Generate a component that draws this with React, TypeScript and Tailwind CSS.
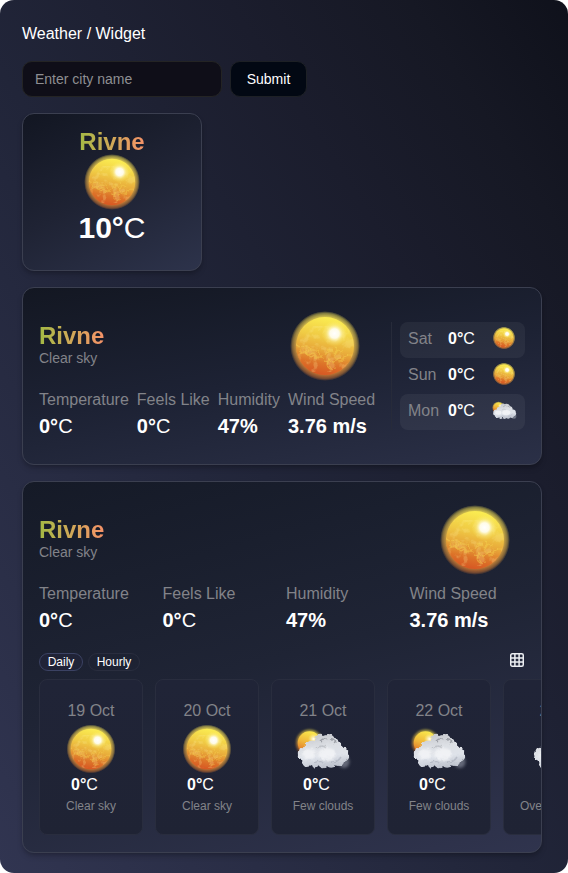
import React, { useId } from "react";

const DISC = "M40 11a29 29 0 1 0 0 58a29 29 0 1 0 0-58Z";
const VEINS =
  "M11 38l4 4 1 5 5-2 3 4 5-2 3 4 5 1 3 4 6-2 4 3 3-5 5 1 4-4 5 0 M16 40l6 1 4 3 6 0 3 5 6-1 3-4 6 3 3-3 5 2 M44 53l-2 6 4 4 5-1 M50 40l2 6-3 4 4 5 6-1 3-7 M24 44l-2 4 4 3 4-2 M37 48l-3 4-5-1";

function Sun({ className = "" }: { className?: string }) {
  const id = useId().replace(/:/g, "");
  return (
    <svg viewBox="0 0 80 80" className={`block shrink-0 ${className}`} aria-hidden="true">
      <defs>
        <linearGradient id={`${id}b`} x1=".6" y1="0" x2=".4" y2="1">
          <stop offset="0" stopColor="#fbee52" />
          <stop offset=".35" stopColor="#f0cb45" />
          <stop offset=".58" stopColor="#e8a93a" />
          <stop offset=".8" stopColor="#dd7429" />
          <stop offset="1" stopColor="#d65523" />
        </linearGradient>
        <linearGradient id={`${id}g`} x1=".6" y1="0" x2=".4" y2="1">
          <stop offset="0" stopColor="#f4e657" />
          <stop offset=".5" stopColor="#e0b045" />
          <stop offset="1" stopColor="#cc6a2c" />
        </linearGradient>
        <radialGradient id={`${id}m`}>
          <stop offset=".8" stopColor="#fff" stopOpacity=".95" />
          <stop offset=".86" stopColor="#fff" stopOpacity=".75" />
          <stop offset=".93" stopColor="#fff" stopOpacity=".5" />
          <stop offset="1" stopColor="#fff" stopOpacity="0" />
        </radialGradient>
        <radialGradient id={`${id}h`}>
          <stop offset="0" stopColor="#fff" />
          <stop offset=".36" stopColor="#fffdf0" stopOpacity=".95" />
          <stop offset=".65" stopColor="#fff6a8" stopOpacity=".4" />
          <stop offset="1" stopColor="#ffed60" stopOpacity="0" />
        </radialGradient>
        <mask id={`${id}k`}>
          <circle cx="40" cy="40" r="35" fill={`url(#${id}m)`} />
        </mask>
        <clipPath id={`${id}c`}>
          <path d={DISC} />
        </clipPath>
        <filter id={`${id}f`} x="0" y="0" width="1" height="1">
          <feTurbulence type="fractalNoise" baseFrequency=".12" numOctaves="4" seed="8" />
          <feColorMatrix values="0 0 0 0 1  0 0 0 0 .86  0 0 0 0 .32  5 0 0 0 -2.3" />
        </filter>
        <filter id={`${id}v`} x="-.1" y="-.1" width="1.2" height="1.2">
          <feTurbulence type="fractalNoise" baseFrequency=".2" numOctaves="3" seed="3" result="n" />
          <feDisplacementMap in="SourceGraphic" in2="n" scale="5" xChannelSelector="R" yChannelSelector="G" />
        </filter>
      </defs>
      <circle cx="40" cy="40" r="35" fill={`url(#${id}g)`} mask={`url(#${id}k)`} />
      <path d={DISC} fill={`url(#${id}b)`} />
      <g clipPath={`url(#${id}c)`}>
        <rect x="11" y="20" width="58" height="46" filter={`url(#${id}f)`} opacity=".24" />
        <path d={VEINS} fill="none" stroke="#f8d850" strokeWidth="1.2" strokeLinejoin="round" opacity=".42" filter={`url(#${id}v)`} />
      </g>
      <circle cx="49.500" cy="27.500" r="13" fill={`url(#${id}h)`} />
    </svg>
  );
}

const CLOUD =
  "M3 27C2 22 6 18 11 19C10 14 15 12 19 13C19 7 24 4 29 7C33 5 38 6 40 11C44 12 47 15 46 19C50 18 54 21 53 25C56 29 53 33 49 34C48 38 44 39 41 37C38 41 34 40 32 38C29 42 26 40 24 38C21 42 17 41 16 37C11 40 6 36 6 32C3 31 2 29 3 27Z";

function FewClouds({ className = "", cloudOnly = false }: { className?: string; cloudOnly?: boolean }) {
  const id = useId().replace(/:/g, "");
  return (
    <svg viewBox="0 0 56 42" className={`block shrink-0 overflow-visible ${className}`} aria-hidden="true">
      <defs>
        <linearGradient id={`${id}c`} x1=".4" y1="0" x2=".6" y2="1">
          <stop offset="0" stopColor="#c6c8cd" />
          <stop offset=".35" stopColor="#dcdfe4" />
          <stop offset=".65" stopColor="#dfe3ea" />
          <stop offset="1" stopColor="#b8bdc9" />
        </linearGradient>
        <linearGradient id={`${id}s`} x1=".6" y1="0" x2=".3" y2="1">
          <stop offset="0" stopColor="#fae94e" />
          <stop offset=".5" stopColor="#efb63a" />
          <stop offset="1" stopColor="#de6324" />
        </linearGradient>
        <radialGradient id={`${id}h`}>
          <stop offset="0" stopColor="#fff" />
          <stop offset="1" stopColor="#fff29a" stopOpacity="0" />
        </radialGradient>
        <filter id={`${id}r`} x="-.1" y="-.1" width="1.2" height="1.2" colorInterpolationFilters="sRGB">
          <feTurbulence type="fractalNoise" baseFrequency=".2" numOctaves="2" seed="4" result="n" />
          <feDisplacementMap in="SourceGraphic" in2="n" scale="4" xChannelSelector="R" yChannelSelector="G" result="d" />
          <feGaussianBlur in="d" stdDeviation=".45" />
        </filter>
        <filter id={`${id}b`} x="-.5" y="-.5" width="2" height="2">
          <feGaussianBlur stdDeviation="1.6" />
        </filter>
        <filter id={`${id}d`} x="-.3" y="-.3" width="1.6" height="1.6">
          <feGaussianBlur stdDeviation=".9" />
        </filter>
        <filter id={`${id}p`} x="-.3" y="-.3" width="1.6" height="1.6">
          <feGaussianBlur stdDeviation="1.2" />
        </filter>
      </defs>
      {!cloudOnly && (
        <>
          <circle cx="14.500" cy="15" r="13.500" fill={`url(#${id}s)`} opacity=".6" filter={`url(#${id}d)`} />
          <circle cx="14.500" cy="15" r="11.800" fill={`url(#${id}s)`} />
          <circle cx="18.500" cy="11" r="5.500" fill={`url(#${id}h)`} />
        </>
      )}
      <ellipse cx="49" cy="34" rx="5.500" ry="6" fill="#878c9b" opacity=".65" filter={`url(#${id}b)`} />
      <g filter={`url(#${id}r)`}>
        <path d={CLOUD} fill={`url(#${id}c)`} />
        <path d="M25 13q4-4 7-1M35 12q4-1 5 3" fill="none" stroke="#7f838b" strokeWidth="1.500" opacity=".65" />
        <path d="M22 20q5-4 9 0" fill="none" stroke="#a4a7ae" strokeWidth="1.500" opacity=".5" />
        <g filter={`url(#${id}p)`}>
          <ellipse cx="14" cy="26" rx="7" ry="5" fill="#fff" opacity=".55" />
          <ellipse cx="32" cy="26" rx="9" ry="6" fill="#fff" opacity=".55" />
        </g>
        <path d="M19 35q6-3 9 0M36 34q6 1 10-5" fill="none" stroke="#9da3b2" strokeWidth="1.500" opacity=".5" />
      </g>
    </svg>
  );
}

function City({ className = "" }: { className?: string }) {
  return (
    <h2 className={`w-fit bg-linear-to-r from-[#a3b944] to-[#f59268] bg-clip-text text-2xl leading-8 font-bold text-transparent ${className}`}>
      Rivne
    </h2>
  );
}

function Zero() {
  return (
    <span>
      <b>0°</b>C
    </span>
  );
}

function Stat({ label, children }: { label: string; children: React.ReactNode }) {
  return (
    <div>
      <p className="text-base leading-6 whitespace-nowrap text-[#828389]">{label}</p>
      <p className="text-xl leading-7 whitespace-nowrap">{children}</p>
    </div>
  );
}

function Stats() {
  return (
    <>
      <Stat label="Temperature"><Zero /></Stat>
      <Stat label="Feels Like"><Zero /></Stat>
      <Stat label="Humidity"><b>47%</b></Stat>
      <Stat label="Wind Speed"><b>3.76 m/s</b></Stat>
    </>
  );
}

function Heading() {
  return (
    <div className="flex h-20 items-center justify-between pr-2.5">
      <div className="pb-1.5">
        <City />
        <p className="-mt-0.5 text-sm leading-4 text-[#828389]">Clear sky</p>
      </div>
      <Sun className="size-20" />
    </div>
  );
}

const WEEK = [
  { day: "Sat", cloudy: false },
  { day: "Sun", cloudy: false },
  { day: "Mon", cloudy: true },
];

const DAILY = [
  { date: "19 Oct", text: "Clear sky" },
  { date: "20 Oct", text: "Clear sky" },
  { date: "21 Oct", text: "Few clouds" },
  { date: "22 Oct", text: "Few clouds" },
  { date: "23 Oct", text: "Overcast clouds" },
];

const CARD = "rounded-xl border border-[#3b3f50] shadow-md shadow-black/20";

export default function App() {
  return (
    <div className="h-[873px] w-[568px] overflow-hidden bg-white font-['Liberation_Sans',Arial,sans-serif] text-white">
      <main className="h-full rounded-[14px] bg-[linear-gradient(57deg,#313551_0%,#212539_46%,#1b1d2d_70%,#161824_86%,#0f111b_100%)] pt-[21px] pr-[26px] pl-[22px]">
        <h1 className="h-10 pt-px text-base leading-6">Weather / Widget</h1>
        <form className="flex gap-2" onSubmit={(e) => e.preventDefault()}>
          <input
            className="h-9 w-50 rounded-[10px] border border-[#242424] bg-[#0f0e18] px-3 text-sm placeholder:text-[#8e8e92]"
            placeholder="Enter city name"
          />
          <button className="h-9 w-[77px] rounded-[10px] border border-[#1d2025] bg-[#020813] text-sm">Submit</button>
        </form>

        <section className={`mt-4 flex h-[158px] w-45 flex-col items-center bg-[linear-gradient(155deg,#121622_0%,#1f2334_50%,#2d334b_100%)] pt-3 ${CARD}`}>
          <City />
          <Sun className="-mt-2 size-16" />
          <p className="-mt-1 text-[30px] leading-9"><b>10°</b>C</p>
        </section>

        <section className={`mt-4 flex h-[178px] items-center bg-[linear-gradient(170deg,#131722_0%,#1d2234_50%,#2b3047_100%)] px-4 ${CARD}`}>
          <div className="w-[336px] pb-1.5">
            <Heading />
            <div className="flex gap-2 pt-0.5"><Stats /></div>
          </div>
          <ul className="ml-4 border-l border-[#272b3a] pl-2">
            {WEEK.map(({ day, cloudy }) => (
              <li key={day} className="flex h-9 w-[125px] items-center rounded-lg px-2 odd:bg-white/5">
                <span className="w-10 pb-[3px] text-[#828389]">{day}</span>
                <span className="grow pb-[3px]"><Zero /></span>
                {cloudy ? <FewClouds className="mb-1 w-[25px]" /> : <Sun className="mb-1 size-[26px]" />}
              </li>
            ))}
          </ul>
        </section>

        <section className={`mt-4 h-[372px] overflow-hidden bg-[linear-gradient(165deg,#151a27_0%,#1f2435_48%,#30344e_100%)] pt-[18px] pl-4 ${CARD}`}>
          <div className="pr-4">
            <Heading />
            <div className="grid grid-cols-4 gap-2 pt-0.5"><Stats /></div>
            <div className="mt-[19px] flex h-[18px] items-center">
              <button className="h-[18px] w-11 rounded-full border border-[#3b4263] bg-[#202337] text-xs leading-4">Daily</button>
              <button className="ml-[5px] h-[18px] w-[52px] rounded-full border border-[#292d3e] text-xs leading-4">Hourly</button>
              <svg viewBox="0 0 16 16" className="mb-[5px] ml-auto size-4 fill-none stroke-[#eceef2] stroke-[1.5]" aria-label="Grid view">
                <rect x="1.750" y="1.750" width="12.500" height="12.500" rx="1.500" />
                <path d="M1.750 5.900h12.500M1.750 10.100h12.500M5.900 1.750v12.500M10.100 1.750v12.500" />
              </svg>
            </div>
          </div>
          <div className="mt-2 flex gap-3">
            {DAILY.map(({ date, text }) => (
              <article key={date} className="flex h-[156px] min-w-26 shrink-0 flex-col items-center rounded-lg border border-[#292d3e] bg-linear-to-b from-[#202437] to-[#1f2334] px-4 pt-[19px]">
                <p className="leading-6 text-[#828389]">{date}</p>
                <div className="flex h-14 items-center">
                  {text === "Clear sky" ? <Sun className="-mt-1 size-14" /> : <FewClouds className={text === "Overcast clouds" ? "-mt-1 w-16" : "-mt-1 w-14"} cloudOnly={text === "Overcast clouds"} />}
                </div>
                <p className="-mt-1.5 w-10 leading-6"><Zero /></p>
                <p className="mt-px text-xs leading-4 whitespace-nowrap text-[#828389]">{text}</p>
              </article>
            ))}
          </div>
        </section>
      </main>
    </div>
  );
}
